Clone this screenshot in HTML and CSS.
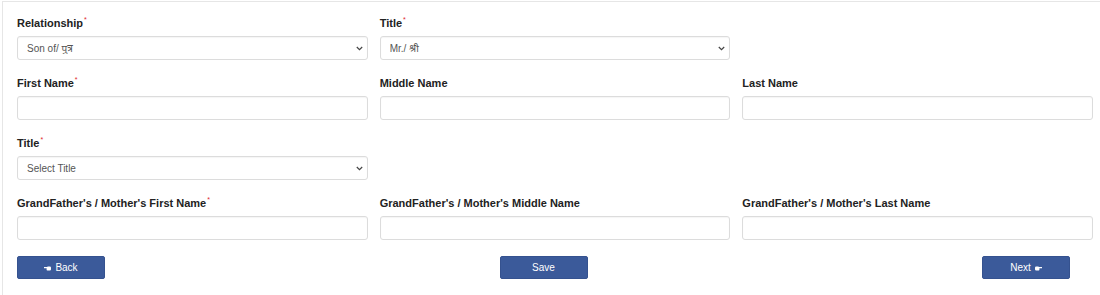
FILE: index.html
```html
<!DOCTYPE html>
<html lang="en">
<head>
<meta charset="utf-8">
<title>Relationship form</title>
<link rel="stylesheet" href="styles.css">
</head>
<body>
<div class="panel">
  <div class="row">
    <div class="field">
      <label class="lbl">Relationship<span class="req">*</span></label>
      <div class="selwrap">
        <select class="ctl sel"><option>Son of/ पुत्र</option></select>
        <svg class="chev" width="7" height="5" viewBox="0 0 7 5"><path d="M0.8 1L3.5 3.7L6.2 1" fill="none" stroke="#444" stroke-width="1.2"/></svg>
      </div>
    </div>
    <div class="field">
      <label class="lbl">Title<span class="req">*</span></label>
      <div class="selwrap">
        <select class="ctl sel"><option>Mr./ श्री</option></select>
        <svg class="chev" width="7" height="5" viewBox="0 0 7 5"><path d="M0.8 1L3.5 3.7L6.2 1" fill="none" stroke="#444" stroke-width="1.2"/></svg>
      </div>
    </div>
  </div>
  <div class="row">
    <div class="field">
      <label class="lbl">First Name<span class="req">*</span></label>
      <input class="ctl" type="text">
    </div>
    <div class="field">
      <label class="lbl">Middle Name</label>
      <input class="ctl" type="text">
    </div>
    <div class="field">
      <label class="lbl">Last Name</label>
      <input class="ctl" type="text">
    </div>
  </div>
  <div class="row">
    <div class="field">
      <label class="lbl">Title<span class="req">*</span></label>
      <div class="selwrap">
        <select class="ctl sel"><option>Select Title</option></select>
        <svg class="chev" width="7" height="5" viewBox="0 0 7 5"><path d="M0.8 1L3.5 3.7L6.2 1" fill="none" stroke="#444" stroke-width="1.2"/></svg>
      </div>
    </div>
  </div>
  <div class="row">
    <div class="field">
      <label class="lbl">GrandFather's / Mother's First Name<span class="req">*</span></label>
      <input class="ctl" type="text">
    </div>
    <div class="field">
      <label class="lbl">GrandFather's / Mother's Middle Name</label>
      <input class="ctl" type="text">
    </div>
    <div class="field">
      <label class="lbl">GrandFather's / Mother's Last Name</label>
      <input class="ctl" type="text">
    </div>
  </div>
  <div class="actions">
    <button class="btn" type="button"><svg class="hand" width="7" height="5" viewBox="0 0 7 5"><path d="M0 1.1h3.4V0.5h2.4Q7 0.5 7 1.7v1.6Q7 4.5 5.8 4.5H3.3Q2.6 4.5 2.6 3.8V2.3H0z" fill="#fff"/></svg>Back</button>
    <button class="btn" type="button">Save</button>
    <button class="btn" type="button">Next<svg class="hand" width="7" height="5" viewBox="0 0 7 5"><path d="M7 1.1H3.6V0.5H1.2Q0 0.5 0 1.7v1.6Q0 4.5 1.2 4.5h2.5Q4.4 4.5 4.4 3.8V2.3H7z" fill="#fff"/></svg></button>
  </div>
</div>
</body>
</html>
```
FILE: styles.css
```css
html, body {
  margin: 0;
  padding: 0;
  background: #ffffff;
  overflow: hidden;
}
body {
  font-family: "Liberation Sans", Arial, "Noto Sans", sans-serif;
  color: #222;
}
.panel {
  margin: 1px 0 0 2px;
  width: 1076px;
  padding: 13px 14px 20px 14px;
  border: 1px solid #e6e6e6;
}
.row {
  display: grid;
  grid-template-columns: repeat(3, 1fr);
  column-gap: 12px;
  margin-bottom: 15px;
}
.field {
  display: flex;
  flex-direction: column;
}
.lbl {
  font-size: 11px;
  font-weight: bold;
  line-height: 17px;
  height: 17px;
  margin-bottom: 4px;
  color: #222;
}
.req {
  color: #e0262b;
  font-size: 7px;
  font-weight: normal;
  line-height: 0;
  position: relative;
  top: -5px;
  margin-left: 1px;
}
.ctl {
  display: block;
  box-sizing: border-box;
  height: 24px;
  width: 100%;
  border: 1px solid #dcdcdc;
  border-radius: 3px;
  background: #fff;
  padding: 0 6px 0 9px;
  font-family: "Liberation Sans", Arial, "Noto Sans", sans-serif;
  font-size: 10px;
  color: #555;
  box-shadow: inset 0 1px 1px rgba(0,0,0,0.04);
  outline: none;
  margin: 0;
}
.selwrap {
  position: relative;
}
.sel {
  -webkit-appearance: none;
  appearance: none;
  padding-left: 9px;
  padding-right: 20px;
}
.chev {
  position: absolute;
  right: 5px;
  top: 10px;
  pointer-events: none;
}
.actions {
  display: flex;
  justify-content: space-between;
  padding: 1px 23px 0 0;
}
.btn {
  width: 88px;
  height: 23px;
  background: #3b5a9a;
  color: #fff;
  border: 1px solid #35528f;
  border-radius: 2px;
  font-family: "Liberation Sans", Arial, sans-serif;
  font-size: 10px;
  padding: 0;
  display: flex;
  align-items: center;
  justify-content: center;
  gap: 4px;
}
.hand {
  display: block;
  margin-top: 1px;
}
```
